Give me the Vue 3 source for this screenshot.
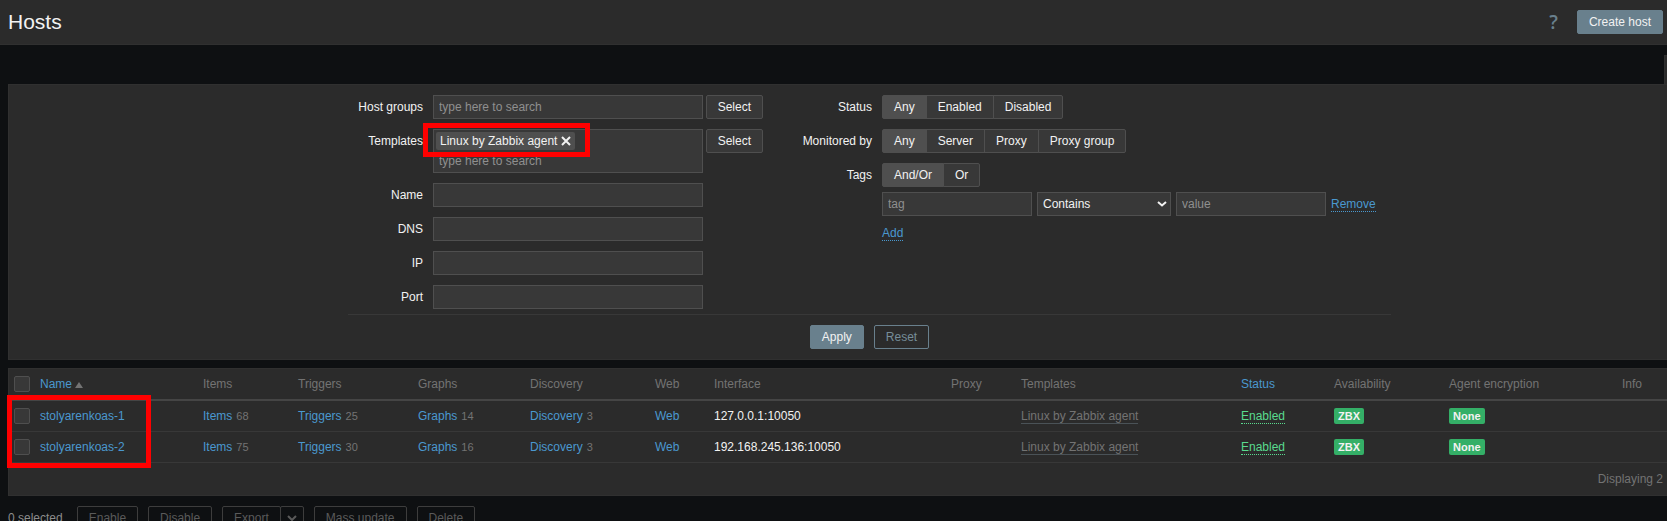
<script setup>
import { ref } from 'vue'

const textFields = ['Name', 'DNS', 'IP', 'Port']
const statusOptions = ['Any', 'Enabled', 'Disabled']
const monitoredOptions = ['Any', 'Server', 'Proxy', 'Proxy group']
const tagOptions = ['And/Or', 'Or']
const status = ref('Any')
const monitored = ref('Any')
const tagMode = ref('And/Or')

const columns = ['name', 'items', 'triggers', 'graphs', 'discovery', 'web', 'interface', 'proxy', 'templates', 'status', 'availability', 'encryption', 'info']

const hosts = [
  { name: 'stolyarenkoas-1', items: 68, triggers: 25, graphs: 14, discovery: 3, address: '127.0.0.1:10050' },
  { name: 'stolyarenkoas-2', items: 75, triggers: 30, graphs: 16, discovery: 3, address: '192.168.245.136:10050' },
]
</script>

<template>
  <div class="page">
    <header class="header">
      <h1>Hosts</h1>
      <div class="header-actions">
        <a class="help" href="#" aria-label="Help">?</a>
        <button class="btn primary" type="button">Create host</button>
      </div>
    </header>

    <div class="tab-strip"><span class="filter-tab"></span></div>

    <form class="filter" @submit.prevent>
      <div class="filter-grid">
        <div class="filter-col">
          <label class="caption" for="groups">Host groups</label>
          <div class="field">
            <input id="groups" class="box" type="text" placeholder="type here to search">
            <button class="btn" type="button">Select</button>
          </div>

          <label class="caption" for="templates">Templates</label>
          <div class="field">
            <div class="box multiselect">
              <span class="chip">Linux by Zabbix agent
                <button type="button" aria-label="Remove template">
                  <svg viewBox="0 0 10 10" width="10" height="10"><path d="M1 1l8 8M9 1L1 9" /></svg>
                </button>
              </span>
              <input id="templates" type="text" placeholder="type here to search">
              <span class="marker marker-template"></span>
            </div>
            <button class="btn" type="button">Select</button>
          </div>

          <template v-for="f in textFields" :key="f">
            <label class="caption" :for="'f-' + f">{{ f }}</label>
            <div class="field"><input :id="'f-' + f" class="box" type="text"></div>
          </template>
        </div>

        <div class="filter-col right">
          <span id="cap-status" class="caption">Status</span>
          <div class="segments" role="radiogroup" aria-labelledby="cap-status">
            <label v-for="o in statusOptions" :key="o"><input v-model="status" type="radio" name="status" :value="o"><span>{{ o }}</span></label>
          </div>

          <span id="cap-monitored" class="caption">Monitored by</span>
          <div class="segments" role="radiogroup" aria-labelledby="cap-monitored">
            <label v-for="o in monitoredOptions" :key="o"><input v-model="monitored" type="radio" name="monitored" :value="o"><span>{{ o }}</span></label>
          </div>

          <span id="cap-tags" class="caption">Tags</span>
          <div class="tags">
            <div class="segments" role="radiogroup" aria-labelledby="cap-tags">
              <label v-for="o in tagOptions" :key="o"><input v-model="tagMode" type="radio" name="tagmode" :value="o"><span>{{ o }}</span></label>
            </div>
            <div class="tag-row">
              <input class="box" type="text" placeholder="tag" aria-label="Tag">
              <div class="select">
                <select aria-label="Operator"><option>Contains</option></select>
                <svg viewBox="0 0 10 6" width="10" height="6"><path d="M1 1l4 3.5L9 1" /></svg>
              </div>
              <input class="box" type="text" placeholder="value" aria-label="Value">
              <a class="dotted" href="#">Remove</a>
            </div>
            <div class="add-row"><a class="dotted" href="#">Add</a></div>
          </div>
        </div>
      </div>
      <div class="filter-actions">
        <button class="btn primary" type="submit">Apply</button>
        <button class="btn outline" type="reset">Reset</button>
      </div>
    </form>

    <div class="list">
      <table>
        <colgroup>
          <col class="c-check">
          <col v-for="c in columns" :key="c" :class="'c-' + c">
        </colgroup>
        <thead>
          <tr>
            <th><input type="checkbox" aria-label="Select all"></th>
            <th><a href="#">Name<svg class="sort" viewBox="0 0 8 6" width="8" height="6"><path d="M0 6L4 0l4 6z" /></svg></a></th>
            <th>Items</th>
            <th>Triggers</th>
            <th>Graphs</th>
            <th>Discovery</th>
            <th>Web</th>
            <th>Interface</th>
            <th>Proxy</th>
            <th>Templates</th>
            <th><a href="#">Status</a></th>
            <th>Availability</th>
            <th>Agent encryption</th>
            <th>Info</th>
          </tr>
        </thead>
        <tbody>
          <tr v-for="h in hosts" :key="h.name">
            <td><input type="checkbox" :aria-label="h.name"></td>
            <td><a href="#">{{ h.name }}</a></td>
            <td><a href="#">Items</a><span class="count">{{ h.items }}</span></td>
            <td><a href="#">Triggers</a><span class="count">{{ h.triggers }}</span></td>
            <td><a href="#">Graphs</a><span class="count">{{ h.graphs }}</span></td>
            <td><a href="#">Discovery</a><span class="count">{{ h.discovery }}</span></td>
            <td><a href="#">Web</a></td>
            <td>{{ h.address }}</td>
            <td></td>
            <td><a class="template" href="#">Linux by Zabbix agent</a></td>
            <td><a class="dotted enabled" href="#">Enabled</a></td>
            <td><span class="badge">ZBX</span></td>
            <td><span class="badge">None</span></td>
            <td></td>
          </tr>
        </tbody>
      </table>
      <div class="summary">Displaying 2</div>
      <span class="marker marker-hosts"></span>
    </div>

    <footer class="actions">
      <span class="selected">0 selected</span>
      <button class="btn ghost" type="button" disabled>Enable</button>
      <button class="btn ghost" type="button" disabled>Disable</button>
      <div class="split">
        <button class="btn ghost" type="button" disabled>Export</button>
        <button class="btn ghost more" type="button" disabled aria-label="Export options">
          <svg viewBox="0 0 10 6" width="10" height="6"><path d="M1 1l4 4 4-4" /></svg>
        </button>
      </div>
      <button class="btn ghost" type="button" disabled>Mass update</button>
      <button class="btn ghost" type="button" disabled>Delete</button>
    </footer>
  </div>
</template>

<style>
html {
  overflow: hidden;
  background: #0e1012;
}
</style>

<style scoped>
.page,
.page * {
  box-sizing: border-box;
}
.page {
  color: #f2f2f2;
  font: 12px/14px "Liberation Sans", Arial, sans-serif;
}
input,
select,
button {
  margin: 0;
  font: inherit;
  color: inherit;
}
a {
  color: #4a98cf;
  text-decoration: none;
}
svg path {
  fill: none;
  stroke: currentColor;
  stroke-width: 2;
}

.header {
  display: flex;
  align-items: center;
  justify-content: space-between;
  height: 45px;
  padding: 0 4px 0 8px;
  background: #2b2b2b;
  border-bottom: 1px solid #303030;
}
h1 {
  margin: 0;
  font-size: 21px;
  line-height: 24px;
  font-weight: 400;
}
.header-actions {
  display: flex;
  align-items: center;
  gap: 19px;
}
.help {
  color: #69808d;
  font: 600 19px/24px "Open Sans", sans-serif;
}

.btn {
  height: 24px;
  padding: 0 11px;
  border: 1px solid #4f4f4f;
  border-radius: 2px;
  background: #383838;
  white-space: nowrap;
}
.btn.primary {
  background: #69808d;
  border-color: #69808d;
}
.btn.outline {
  background: transparent;
  border-color: #69808d;
  color: #768d99;
}
.btn.ghost {
  background: transparent;
  border-color: #3d3d3d;
  color: #5a5a5a;
}

.tab-strip {
  display: flex;
  justify-content: flex-end;
  height: 39px;
  padding-top: 10px;
}
.filter-tab {
  width: 3px;
  background: #2b2b2b;
  border: solid #303030;
  border-width: 1px 0 0 1px;
}

.filter {
  display: flex;
  flex-direction: column;
  align-items: center;
  margin-left: 8px;
  padding: 10px 0 10px 63px;
  background: #2b2b2b;
  border: 1px solid #303030;
  border-right: 0;
}
.filter-grid {
  display: flex;
  width: 100%;
  max-width: 1043px;
  padding-bottom: 5px;
  border-bottom: 1px solid #383838;
}
.filter-col {
  display: grid;
  grid-template-columns: 75px 330px;
  gap: 10px;
  align-content: start;
}
.filter-col.right {
  flex: 1;
  grid-template-columns: 109px 1fr;
}
.caption {
  line-height: 24px;
  text-align: right;
  white-space: nowrap;
}
.field {
  display: flex;
  align-items: flex-start;
  gap: 3px;
}
.box {
  width: 270px;
  height: 24px;
  padding: 0 5px;
  background: #383838;
  border: 1px solid #4f4f4f;
  border-radius: 0;
}
::placeholder {
  color: #8f8f8f;
  opacity: 1;
}
.multiselect {
  position: relative;
  height: 44px;
  padding: 2px;
}
.multiselect input {
  display: block;
  width: 100%;
  height: 22px;
  padding: 0 3px;
  background: none;
  border: 0;
}
.chip {
  display: flex;
  align-items: center;
  gap: 4px;
  width: max-content;
  height: 18px;
  padding: 0 4px;
  background: #4f4f4f;
  border-radius: 2px;
}
.chip button {
  display: flex;
  padding: 0;
  background: none;
  border: 0;
}
.marker {
  position: absolute;
  border: 5px solid #ff0000;
  pointer-events: none;
}
.marker-template {
  left: -11px;
  top: -7px;
  width: 167px;
  height: 34px;
}
.marker-hosts {
  left: -2px;
  top: 26px;
  width: 144px;
  height: 73px;
}

.segments {
  display: flex;
}
.segments input {
  position: absolute;
  opacity: 0;
}
.segments span {
  display: block;
  height: 24px;
  margin-right: -1px;
  padding: 0 11px;
  line-height: 22px;
  background: #383838;
  border: 1px solid #4f4f4f;
}
.segments label:first-child span {
  border-radius: 2px 0 0 2px;
}
.segments label:last-child span {
  border-radius: 0 2px 2px 0;
}
.segments input:checked + span {
  background: #4f4f4f;
}
.tag-row {
  display: flex;
  align-items: center;
  gap: 5px;
  margin-top: 5px;
}
.tag-row .box {
  width: 150px;
}
.select {
  position: relative;
  width: 134px;
}
.select select {
  display: block;
  width: 100%;
  height: 24px;
  padding: 0 5px;
  appearance: none;
  background: #383838;
  border: 1px solid #4f4f4f;
  border-radius: 0;
}
.select svg {
  position: absolute;
  right: 4px;
  top: 9px;
  pointer-events: none;
}
.dotted {
  border-bottom: 1px dotted currentColor;
}
.add-row {
  margin-top: 10px;
}
.filter-actions {
  display: flex;
  gap: 10px;
  padding-top: 10px;
}

.list {
  position: relative;
  margin: 8px 0 0 8px;
  background: #2b2b2b;
  border: 1px solid #303030;
  border-right: 0;
}
table {
  width: 100%;
  table-layout: fixed;
  border-collapse: collapse;
}
th,
td {
  height: 31px;
  padding: 0 5px;
  text-align: left;
  font-weight: 400;
  white-space: nowrap;
  vertical-align: middle;
  border-bottom: 1px solid #383838;
}
th {
  color: #737373;
  border-bottom: 2px solid #454545;
}
.c-check { width: 26px; }
.c-name { width: 163px; }
.c-items { width: 95px; }
.c-triggers { width: 120px; }
.c-graphs { width: 112px; }
.c-discovery { width: 125px; }
.c-web { width: 59px; }
.c-interface { width: 237px; }
.c-proxy { width: 70px; }
.c-templates { width: 220px; }
.c-status { width: 93px; }
.c-availability { width: 115px; }
.c-encryption { width: 173px; }
.c-info { width: 50px; }

input[type="checkbox"] {
  display: block;
  width: 16px;
  height: 16px;
  appearance: none;
  background: #383838;
  border: 1px solid #4f4f4f;
  border-radius: 2px;
}
.sort {
  margin-left: 3px;
}
.sort path {
  fill: #737373;
  stroke: none;
}
.count {
  margin-left: 4px;
  font-size: 11px;
  color: #737373;
}
.template {
  color: #737373;
  border-bottom: 1px solid #4a5257;
}
.enabled {
  color: #59db8f;
}
.badge {
  display: inline-block;
  height: 16px;
  padding: 0 4px;
  font-size: 11px;
  line-height: 16px;
  font-weight: 700;
  background: #34af67;
  border-radius: 2px;
}
.summary {
  padding: 9px 4px;
  text-align: right;
  color: #737373;
}

.actions {
  display: flex;
  align-items: center;
  gap: 10px;
  margin: 10px 0 0 8px;
}
.selected {
  margin-right: 4px;
  color: #8c8c8c;
}
.split {
  display: flex;
}
.btn.more {
  width: 24px;
  margin-left: -1px;
  padding: 0 6px;
}
.more svg {
  display: block;
}
</style>
